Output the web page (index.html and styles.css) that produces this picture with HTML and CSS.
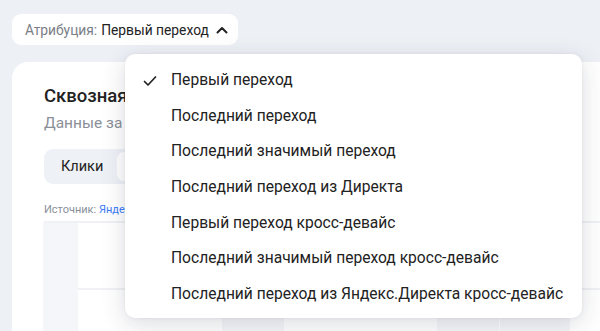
FILE: index.html
```html
<!DOCTYPE html>
<html lang="ru">
<head>
    <meta charset="UTF-8">
    <meta name="viewport" content="width=device-width, initial-scale=1.0">
    <title>Атрибуция</title>
    <link rel="stylesheet" href="styles.css">
</head>

<body>
    <div class="toolbar">
        <button class="attr">
            <span class="attr-label">Атрибуция:</span>
            <span class="attr-value">Первый переход</span>
            <svg class="chevron" width="14" height="14" viewBox="0 0 14 14">
                <path d="M2.5 9.5 L7 5 L11.5 9.5" fill="none" stroke="#222" stroke-width="2" stroke-linecap="round" stroke-linejoin="round"/>
            </svg>
        </button>
    </div>

    <div class="card">
        <h2 class="title">Сквозная аналитика</h2>
        <div class="subtitle">Данные за период</div>
        <div class="tabs">
            <span class="tab">Клики</span>
            <span class="tab active">Визиты</span>
        </div>
        <div class="source">Источник: <a href="#">Яндекс.Директ</a></div>
        <div class="chart">
            <div class="row"></div>
            <div class="row"></div>
            <div class="col c1"></div>
            <div class="col c2"></div>
            <div class="col c3"></div>
            <div class="col c4"></div>
        </div>
    </div>

    <ul class="menu">
        <li class="selected">
            <svg class="check" width="16" height="16" viewBox="0 0 16 16">
                <path d="M2.5 8.5 L6 12 L13.5 4" fill="none" stroke="#222" stroke-width="1.7" stroke-linecap="round" stroke-linejoin="round"/>
            </svg>
            Первый переход
        </li>
        <li>Последний переход</li>
        <li>Последний значимый переход</li>
        <li>Последний переход из Директа</li>
        <li>Первый переход кросс-девайс</li>
        <li>Последний значимый переход кросс-девайс</li>
        <li>Последний переход из Яндекс.Директа кросс-девайс</li>
    </ul>
</body>

</html>
```

FILE: styles.css
```css
body {
    margin: 0;
    background: #edf0f5;
    font-family: Roboto, "Noto Sans", sans-serif;
    color: #222;
    overflow: hidden;
    height: 331px;
}

.toolbar {
    padding: 14px 12px 0;
}

.attr {
    display: flex;
    align-items: center;
    height: 31px;
    padding: 0 9px 0 13px;
    border: none;
    border-radius: 9px;
    background: #fff;
    font-family: inherit;
    font-size: 13.8px;
}

.attr-label {
    color: #7a7e86;
}

.attr-value {
    margin-left: 4px;
    color: #222;
}

.chevron {
    margin-left: 6px;
}

.card {
    margin: 17px 0 0 12px;
    width: 640px;
    height: 300px;
    background: #fff;
    border-radius: 16px;
    padding: 22px 32px 0;
    box-sizing: border-box;
}

.title {
    margin: 0;
    font-size: 18.5px;
    font-weight: 500;
    line-height: 24px;
}

.subtitle {
    margin-top: 6px;
    font-size: 15.5px;
    color: #8a8f98;
}

.tabs {
    display: flex;
    margin-top: 17px;
    width: 420px;
    height: 35px;
    padding: 3px;
    box-sizing: border-box;
    background: #eef1f6;
    border-radius: 9px;
}

.tab {
    display: flex;
    align-items: center;
    padding: 0 14px;
    font-size: 14.5px;
}

.tab.active {
    background: #fff;
    border-radius: 7px;
    color: #fff;
}

.source {
    margin-top: 19px;
    font-size: 11px;
    color: #8a8f98;
}

.source a {
    color: #3d7df5;
    text-decoration: none;
}

.chart {
    position: relative;
    margin-top: 5px;
    height: 120px;
    border-top: 2px solid #f0f1f4;
}

.row {
    height: 65px;
    border-bottom: 2px solid #f0f1f4;
}

.col {
    position: absolute;
    top: 0;
    bottom: 0;
    background: #f5f6f9;
}

.c1 { left: -1px; width: 35px; }
.c2 { left: 178px; width: 62px; }
.c3 { left: 393px; width: 62px; }
.c4 { left: 456px; width: 70px; }

.menu {
    position: absolute;
    left: 125px;
    top: 54px;
    width: 457px;
    margin: 0;
    padding: 9px 0 5px;
    list-style: none;
    background: #fff;
    border-radius: 10px;
    box-shadow: 0 6px 24px rgba(30, 40, 60, 0.16), 0 0 4px rgba(30, 40, 60, 0.06);
}

.menu li {
    position: relative;
    height: 35.7px;
    line-height: 35.7px;
    padding-left: 46px;
    font-size: 15.6px;
    color: #222;
}

.check {
    position: absolute;
    left: 17px;
    top: 10px;
}
```
